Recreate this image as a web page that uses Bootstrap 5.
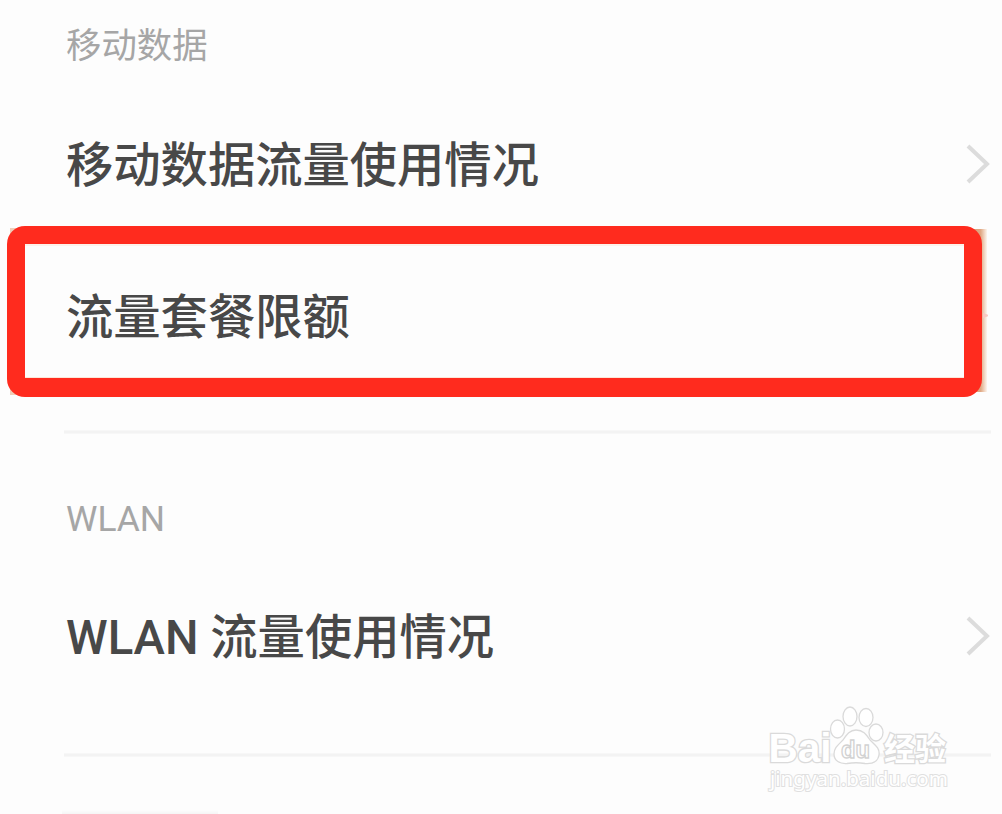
<!DOCTYPE html>
<html lang="zh-CN">
<head>
  <meta charset="UTF-8">
  <meta name="viewport" content="width=device-width, initial-scale=1">
  <title>流量使用情况</title>
  <link href="https://cdn.jsdelivr.net/npm/bootstrap@5.3.2/dist/css/bootstrap.min.css" rel="stylesheet">
  <style>
    body {
      background: #fdfdfd;
      font-family: Roboto, "Noto Sans CJK SC", sans-serif;
    }
    .screen { height: 814px; }
    .group { padding: 0 11px 0 66px; }
    .group-title {
      height: 90px;
      padding-top: 3px;
      font-size: 35.4px;
      line-height: 1;
      color: #a6a6a6;
    }
    .group-wlan .group-title { height: 168px; }
    .setting {
      height: 150px;
      font-size: 47.3px;
      font-weight: 500;
      line-height: 1;
      color: #484848;
    }
    .setting span { padding-top: 4px; }
    .setting-limit { height: 154px; }
    .group-wlan .setting { height: 70px; }
    .divider {
      height: 4px;
      margin: 36px 11px 0 64px;
      background: linear-gradient(#f9f9f9, #f1f1f1, #f9f9f9);
    }
    .group-wlan + .divider { margin-top: 81px; }
    .chevron { width: 26px; height: 42px; margin-top: -3px; }
    /* top edge of the next group, cut off by the screen */
    .next-edge {
      width: 156px;
      height: 4px;
      margin: 53px 0 0 62px;
      background: linear-gradient(#fdfdfd, #f5f5f5);
    }

    /* red frame over the limit row */
    .highlight {
      left: 7px;
      top: 226px;
      width: 981px;
      height: 171px;
    }
    .watermark { left: 764px; top: 700px; }
  </style>
</head>
<body>

  <main class="screen position-relative overflow-hidden">
    <section class="group">
      <div class="group-title d-flex align-items-center">移动数据</div>
      <div class="setting d-flex align-items-center justify-content-between">
        <span>移动数据流量使用情况</span>
        <svg class="chevron" viewBox="0 0 26 42"><path d="M3 3 L22 21 L3 39" fill="none" stroke="#dcdcdc" stroke-width="4"/></svg>
      </div>
      <div class="setting setting-limit d-flex align-items-center">
        <span>流量套餐限额</span>
      </div>
    </section>
    <div class="divider"></div>

    <section class="group group-wlan">
      <div class="group-title d-flex align-items-center">WLAN</div>
      <div class="setting d-flex align-items-center justify-content-between">
        <span>WLAN 流量使用情况</span>
        <svg class="chevron" viewBox="0 0 26 42"><path d="M3 3 L22 21 L3 39" fill="none" stroke="#dcdcdc" stroke-width="4"/></svg>
      </div>
    </section>
    <div class="divider"></div>
    <div class="next-edge"></div>

    <svg class="highlight position-absolute" viewBox="0 0 981 171">
      <defs>
        <linearGradient id="edge">
          <stop offset="0" stop-color="#d99a75"/>
          <stop offset=".65" stop-color="#e0a884"/>
          <stop offset="1" stop-color="#fdf6ee"/>
        </linearGradient>
      </defs>
      <path d="M962 3 h18 v163 h-18z" fill="url(#edge)"/>
      <path d="M3 2 h15 v167 h-15z" fill="#f0cdb8"/>
      <path fill-rule="evenodd" fill="#ff2b1e" d="M18 0 H957 A18 18 0 0 1 975 18 V153 A18 18 0 0 1 957 171 H18 A18 18 0 0 1 0 153 V18 A18 18 0 0 1 18 0Z M18 18 V152 H957 V18Z"/>
      <path d="M18 19 H957 M18 151.500 H957" stroke="#fde6d8"/>
      <path d="M976 87 l7 2.500 l-7 2.500z" fill="#f9c9c2"/>
    </svg>

    <svg class="watermark position-absolute" width="190" height="96" viewBox="0 0 190 96" fill="#fff" stroke="#dadada" stroke-width="1.300">
      <text x="4.500" y="61.500" font-family="Liberation Sans, sans-serif" font-weight="700" font-size="41" textLength="63" lengthAdjust="spacingAndGlyphs" stroke-width="2.600" paint-order="stroke">Bai</text>
      <ellipse cx="73.500" cy="29" rx="7" ry="9"/>
      <ellipse cx="86" cy="16.500" rx="7" ry="9.500"/>
      <ellipse cx="102" cy="17.500" rx="7" ry="9"/>
      <ellipse cx="112" cy="32.500" rx="7" ry="8.500"/>
      <path d="M92 30 C99 30 102 34 106 40 C111 45 116 48 115 55 C114 62 108 64 101 63.500 C95 62.500 89 62.500 83 63.500 C76 64 70 61 70 54 C70 48 74 45 79 40 C83 34 86 30 92 30Z"/>
      <text x="77" y="57.500" font-family="Liberation Sans, sans-serif" font-weight="700" font-size="24" textLength="29" lengthAdjust="spacingAndGlyphs" stroke="#d2d2d2" stroke-width="1.300">du</text>
      <text x="120" y="60" font-family="Noto Sans CJK SC, sans-serif" font-weight="700" font-size="31" textLength="62" lengthAdjust="spacingAndGlyphs" stroke-width="2.600" paint-order="stroke">经验</text>
      <text x="6" y="86" font-family="Noto Sans, sans-serif" font-size="20" textLength="178" lengthAdjust="spacingAndGlyphs" stroke-width="2" stroke="#e0e0e0" paint-order="stroke">jingyan.baidu.com</text>
    </svg>
  </main>

  <script src="https://cdn.jsdelivr.net/npm/bootstrap@5.3.2/dist/js/bootstrap.bundle.min.js"></script>
</body>
</html>
